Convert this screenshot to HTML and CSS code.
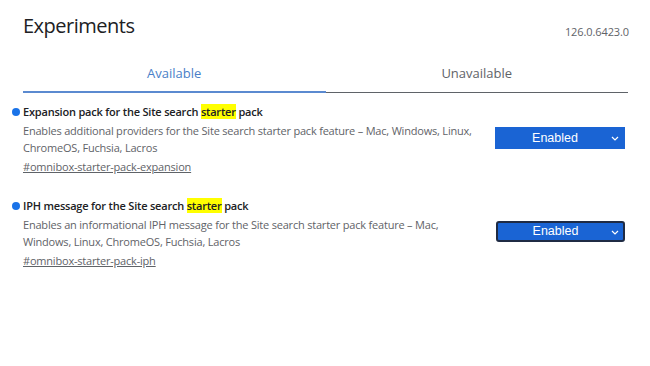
FILE: index.html
```html
<!DOCTYPE html>
<html lang="en">
<head>
  <meta charset="UTF-8" />
  <title>Experiments</title>
  <link rel="stylesheet" href="styles.css">
</head>
<body>
  <!-- Header -->
  <div class="header">
    <h1>Experiments</h1>
    <div class="version">126.0.6423.0</div>
  </div>

  <!-- Tabs -->
  <div class="tabs">
    <div class="tab selected">Available</div>
    <div class="tab">Unavailable</div>
  </div>

  <!-- Experiment list -->
  <div class="experiments">
    <div class="experiment">
      <div class="exp-text">
        <h3 class="exp-title"><span class="dot"></span>Expansion pack for the Site search <mark>starter</mark> pack</h3>
        <p class="exp-desc">Enables additional providers for the Site search starter pack feature – Mac, Windows, Linux, ChromeOS, Fuchsia, Lacros</p>
        <a class="permalink" href="#omnibox-starter-pack-expansion">#omnibox-starter-pack-expansion</a>
      </div>
      <div class="exp-action">
        <div class="select">Enabled
          <svg class="chevron" width="8" height="5" viewBox="0 0 8 5"><path d="M1 1l3 3 3-3" fill="none" stroke="#fff" stroke-width="1.2"/></svg>
        </div>
      </div>
    </div>

    <div class="experiment">
      <div class="exp-text">
        <h3 class="exp-title"><span class="dot"></span>IPH message for the Site search <mark>starter</mark> pack</h3>
        <p class="exp-desc">Enables an informational IPH message for the Site search starter pack feature – Mac, Windows, Linux, ChromeOS, Fuchsia, Lacros</p>
        <a class="permalink" href="#omnibox-starter-pack-iph">#omnibox-starter-pack-iph</a>
      </div>
      <div class="exp-action">
        <div class="select focused">Enabled
          <svg class="chevron" width="8" height="5" viewBox="0 0 8 5"><path d="M1 1l3 3 3-3" fill="none" stroke="#fff" stroke-width="1.2"/></svg>
        </div>
      </div>
    </div>
  </div>
</body>
</html>
```

FILE: styles.css
```css
* {
  margin: 0;
  padding: 0;
  box-sizing: border-box;
}
body {
  background-color: #fff;
  color: #202124;
  font-family: "Open Sans", "Noto Sans", sans-serif;
  padding: 0 21px 0 23px;
}
/* Header */
.header {
  display: flex;
  justify-content: space-between;
  align-items: flex-end;
  padding-top: 10px;
  height: 40px;
}
.header h1 {
  font-size: 20px;
  font-weight: normal;
  line-height: 28px;
  letter-spacing: -0.5px;
}
.version {
  font-size: 11px;
  letter-spacing: -0.1px;
  color: #5f6368;
  line-height: 16px;
}
/* Tabs */
.tabs {
  display: flex;
  margin-top: 24px;
  margin-right: 1px;
  border-bottom: 1px solid #5f6368;
}
.tab {
  flex: 1;
  text-align: center;
  font-size: 13px;
  color: #5f6368;
  line-height: 18px;
  padding-bottom: 9px;
}
.tab.selected {
  color: #4a7fc8;
  border-bottom: 2px solid #5b8ad0;
  margin-bottom: -1px;
}
/* Experiments */
.experiments {
  padding-top: 10px;
}
.experiment {
  display: flex;
  justify-content: space-between;
  margin-bottom: 22px;
}
.exp-text {
  width: 455px;
  letter-spacing: -0.2px;
}
.exp-title {
  position: relative;
  font-size: 11px;
  font-weight: 600;
  line-height: 18px;
  color: #202124;
}
.dot {
  position: absolute;
  left: -11px;
  top: 5px;
  width: 8px;
  height: 8px;
  border-radius: 50%;
  background-color: #1a73e8;
}
mark {
  background-color: #ffff00;
  color: inherit;
}
.exp-desc {
  font-size: 11px;
  line-height: 16.5px;
  color: #5f6368;
  margin-top: 2px;
}
.permalink {
  display: block;
  width: fit-content;
  font-size: 11px;
  line-height: 16px;
  color: #5f6368;
  margin-top: 3px;
}
.exp-action {
  padding-top: 24px;
  margin-right: 4px;
}
.select {
  position: relative;
  width: 130px;
  height: 22px;
  background-color: #1a64d4;
  color: #fff;
  font-family: "Liberation Sans", Arial, sans-serif;
  font-size: 12.5px;
  line-height: 22px;
  text-align: center;
  padding-right: 10px;
}
.select.focused {
  width: 129px;
  height: 21px;
  border: 2px solid #1f2b44;
  border-radius: 3px;
  line-height: 17px;
}
.chevron {
  position: absolute;
  right: 6px;
  top: 9px;
}
.select.focused .chevron {
  right: 4px;
  top: 7px;
}
```
